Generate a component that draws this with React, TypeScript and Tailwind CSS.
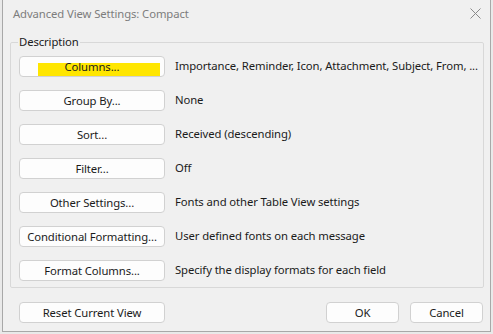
interface Row {
  label: string
  text: string
  highlight?: boolean
}

const rows: Row[] = [
  { label: 'Columns...', text: 'Importance, Reminder, Icon, Attachment, Subject, From, ...', highlight: true },
  { label: 'Group By...', text: 'None' },
  { label: 'Sort...', text: 'Received (descending)' },
  { label: 'Filter...', text: 'Off' },
  { label: 'Other Settings...', text: 'Fonts and other Table View settings' },
  { label: 'Conditional Formatting...', text: 'User defined fonts on each message' },
  { label: 'Format Columns...', text: 'Specify the display formats for each field' },
]

function Button({ label, className = '', highlight = false }: { label: string; className?: string; highlight?: boolean }) {
  return (
    <button className={`relative h-[21px] shrink-0 rounded-[4px] border border-[#d1d1d1] bg-[#fdfdfd] text-[11.3px] leading-none text-[#1b1b1b] ${className}`}>
      {highlight && <span className="absolute left-[18px] top-[6px] h-[13px] w-[122px] bg-[#ffe600]" />}
      <span className="relative">{label}</span>
    </button>
  )
}

export default function App() {
  return (
    <div className="h-[334px] w-[493px] bg-[#e9e9e9] font-['Noto_Sans',sans-serif] tracking-[-0.1px]">
      <div className="ml-[2px] flex h-[332px] w-[489px] flex-col border-x border-b border-[#a8a8a8] bg-[#f0f0f0]">
        {/* Title bar */}
        <div className="flex h-[28px] items-center justify-between pl-[10px] pr-[9px]">
          <span className="text-[11.3px] text-[#7d7d7d]">Advanced View Settings: Compact</span>
          <svg width="11" height="11" viewBox="0 0 11 11" className="mb-[2px]">
            <path d="M0.5 0.5L10.5 10.5M10.5 0.5L0.5 10.5" stroke="#8a8a8a" strokeWidth="1" />
          </svg>
        </div>

        {/* Description group */}
        <fieldset className="ml-[7px] mt-[6px] flex h-[254px] w-[474px] min-w-0 flex-col gap-[13px] overflow-hidden rounded-[2px] border border-[#d8d8d8] pl-[8px] pt-[6px]">
          <legend className="ml-[-1px] px-[1px] text-[11.3px] leading-[16px] text-[#1b1b1b]">Description</legend>
          {rows.map((row) => (
            <div key={row.label} className="flex items-center gap-[10px]">
              <Button label={row.label} highlight={row.highlight} className="w-[146px]" />
              <span className="whitespace-nowrap text-[11.3px] text-[#1b1b1b]">{row.text}</span>
            </div>
          ))}
        </fieldset>

        {/* Footer buttons */}
        <div className="mt-[14px] flex items-center pl-[16px]">
          <Button label="Reset Current View" className="w-[146px]" />
          <Button label="OK" className="ml-auto w-[73px]" />
          <Button label="Cancel" className="ml-[11px] mr-[7px] w-[73px]" />
        </div>
      </div>
    </div>
  )
}
